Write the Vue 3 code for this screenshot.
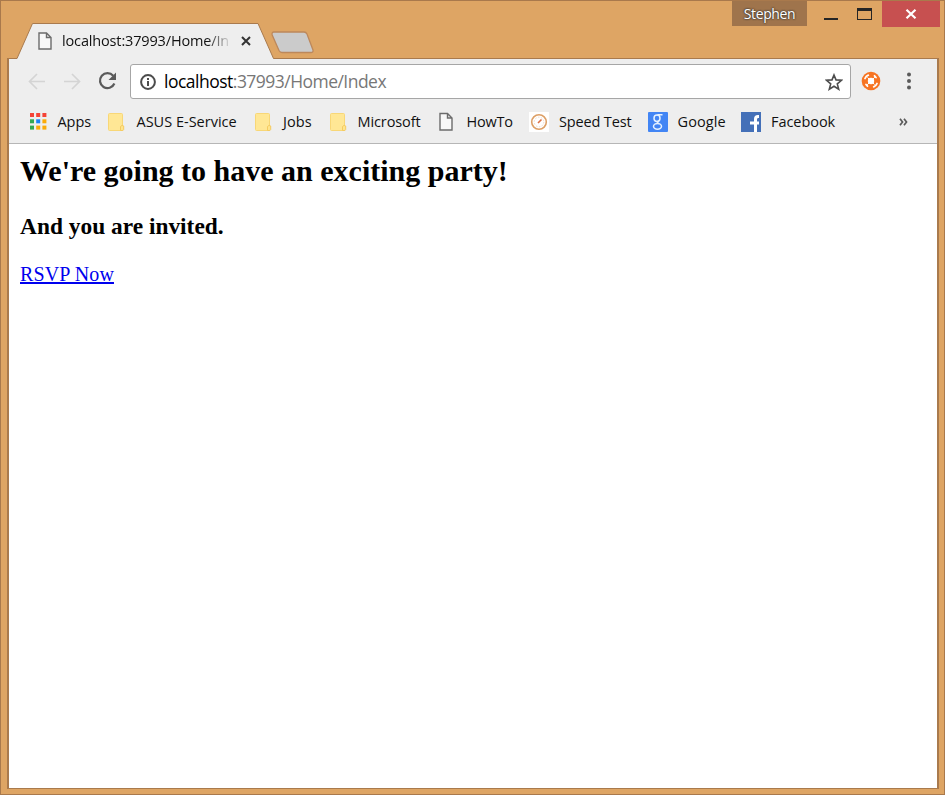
<script setup>
const dots = ['#f44336', '#f44336', '#f44336', '#34a853', '#1a82f7', '#fbab09', '#34a853', '#fbab09', '#fbab09']
const bookmarks = [
  { name: 'Apps', icon: 'apps', iconWidth: 29.5, width: 80, spacing: -0.05 },
  { name: 'ASUS E-Service', icon: 'folder', iconWidth: 28.5, width: 147, spacing: 0 },
  { name: 'Jobs', icon: 'folder', iconWidth: 28, width: 75, spacing: 0.1 },
  { name: 'Microsoft', icon: 'folder', iconWidth: 27.5, width: 109, spacing: -0.1 },
  { name: 'HowTo', icon: 'page', iconWidth: 27.5, width: 90, spacing: -0.2 },
  { name: 'Speed Test', icon: 'speed', iconWidth: 30, width: 119, spacing: -0.15 },
  { name: 'Google', icon: 'google', iconWidth: 29.5, width: 93, spacing: 0.1 },
  { name: 'Facebook', icon: 'facebook', iconWidth: 30, width: 100, spacing: -0.05 },
]
</script>

<template>
  <div class="window">
    <header class="titlebar">
      <div class="tab">
        <svg class="tab-shape" width="260" height="37" viewBox="0 0 260 37">
          <path d="M0 37V35.5H2L17.5 .5H243L258.500 35.500H260V37Z" fill="#eee" />
          <path d="M0 35.500H2L17.500 .5H243L258.500 35.500H260" fill="none" stroke="#a97a4d" />
        </svg>
        <svg class="tab-page" width="14" height="18" viewBox="0 0 14 18">
          <path d="M1 1H8.500L13 5.500V17H1ZM8.500 1V5.500H13" fill="#f8f8f8" stroke="#6c6c6c" stroke-width="1.4" />
        </svg>
        <span class="tab-title">localhost:37993/Home/In</span>
        <svg class="tab-close" width="10" height="10" viewBox="0 0 10 10">
          <path d="M1 1L9 9M9 1L1 9" stroke="#333" stroke-width="2" />
        </svg>
      </div>
      <svg class="new-tab" width="44" height="23" viewBox="0 0 44 23">
        <path d="M3 1H33Q35 1 36 3L42 19Q42.500 21.500 40 21.500H11Q9 21.500 8 19.500L1.200 4Q.5 1 3 1Z" fill="#cbcbcb" stroke="#bd885b" stroke-width="1.3" />
      </svg>
      <div class="controls">
        <span class="user">Stephen</span>
        <svg class="minmax" width="75" height="27" viewBox="0 0 75 27">
          <path d="M17 17H31V19H17Z" fill="#252525" />
          <path d="M50 7H65V19H50ZM51 10V18H64V10Z" fill="#252525" fill-rule="evenodd" />
        </svg>
        <span class="close">
          <svg width="12" height="10" viewBox="0 0 12 10"><path d="M1.500 .8L10.500 9.200M10.500 .8L1.500 9.200" stroke="#fff" stroke-width="2.200" /></svg>
        </span>
      </div>
    </header>

    <main class="client">
      <div class="toolbar">
        <svg class="nav" width="121" height="44" viewBox="0 0 121 44">
          <g fill="none" stroke="#d4d4d4" stroke-width="1.700">
            <path d="M36 22.500H21M28 15L20.500 22.500L28 30" />
            <path d="M55 22.500H70M63 15L70.500 22.500L63 30" />
          </g>
          <path d="M104.200 16.700A7.500 7.500 0 1 0 105.400 24.500" fill="none" stroke="#5a5a5a" stroke-width="2.200" />
          <path d="M107 13.500V21H99.500Z" fill="#5a5a5a" />
        </svg>
        <div class="omnibox">
          <svg class="info" width="16" height="16" viewBox="0 0 16 16">
            <circle cx="8" cy="8" r="6.900" fill="none" stroke="#4c4c4c" stroke-width="2" />
            <path d="M7 4H9V6H7ZM7 7H9V12H7Z" fill="#4c4c4c" />
          </svg>
          <span class="url"><b>localhost</b>:37993/Home/Index</span>
          <svg class="star" width="18" height="18" viewBox="0 0 18 18">
            <path d="M9 2L11 6.900L16.500 7.300L12.300 10.900L13.700 16.200L9 13.300L4.300 16.200L5.700 10.900L1.500 7.300L7 6.900Z" fill="none" stroke="#4d4d4d" stroke-width="1.600" />
          </svg>
        </div>
        <svg class="extension" width="20" height="20" viewBox="0 0 20 20">
          <circle cx="10" cy="10" r="9.300" fill="#f77422" />
          <circle cx="10" cy="10" r="3.200" fill="#fff" />
          <path d="M4 7.500Q5 5 7.300 4.200M13.500 4.800L15 6.500M16 12.500Q15 15 12.700 15.800M6.500 15.200L5 13.500" fill="none" stroke="#fff" stroke-width="1.800" stroke-linecap="round" />
          <path d="M13.800 6.200L12 8M6.200 13.800L8 12M6.500 6.500L8 8M13.500 13.500L12 12" stroke="#fff" stroke-width="1" />
        </svg>
        <svg class="menu" width="4" height="18" viewBox="0 0 4 18">
          <g fill="#5a5a5a"><circle cx="2" cy="2.500" r="2" /><circle cx="2" cy="9" r="2" /><circle cx="2" cy="15.500" r="2" /></g>
        </svg>
      </div>

      <nav class="bookmarks">
        <a v-for="b in bookmarks" :key="b.name" class="bookmark" :style="{ width: b.width + 'px' }">
          <span class="bookmark-icon" :style="{ width: b.iconWidth + 'px' }">
            <svg width="20" height="20" viewBox="0 0 20 20">
              <g v-if="b.icon === 'apps'">
                <rect v-for="(c, i) in dots" :key="i" :x="2 + (i % 3) * 6.200" :y="1 + Math.floor(i / 3) * 6.300" width="4" height="4" :fill="c" />
              </g>
              <g v-else-if="b.icon === 'folder'">
                <rect x=".5" y="1.500" width="14" height="17" rx="1" fill="#ffe795" stroke="#f8d777" />
                <path d="M12.500 18.500V14.500Q14 12.500 15.700 14V17.500Q15.500 18.500 14 18.500Z" fill="#ffe58c" stroke="#f5cb60" />
              </g>
              <path v-else-if="b.icon === 'page'" d="M1 1.500H8.500L13 6V18H1ZM8.500 1.500V6H13" fill="#f8f8f8" stroke="#6c6c6c" stroke-width="1.400" />
              <g v-else-if="b.icon === 'speed'">
                <rect width="20" height="20" fill="#fff" />
                <circle cx="10" cy="10" r="7.300" fill="none" stroke="#dda067" stroke-width="1.600" />
                <circle cx="10" cy="10" r="4.800" fill="none" stroke="#f1d8c4" stroke-dasharray="1.500 1.500" />
                <path d="M9 11L12.500 7.500" stroke="#dc7045" stroke-width="1.600" />
              </g>
              <g v-else-if="b.icon === 'google'">
                <rect width="20" height="20" rx="1" fill="#4285f4" />
                <g fill="none" stroke="#e4f1ff" stroke-width="1.500">
                  <ellipse cx="9" cy="6.200" rx="3" ry="3.200" />
                  <path d="M9.500 2.800H14.500M11 9Q8 10 10.500 11.200" />
                  <ellipse cx="9.500" cy="14.300" rx="4" ry="2.900" />
                </g>
              </g>
              <g v-else>
                <rect width="20" height="20" fill="#4470b8" />
                <path d="M13 20V12.500H9V9.500H13V7Q13 3 17 3H18V6H17Q16 6 16 7.500V9.500H18V12.500H16V20Z" fill="#fff" />
              </g>
            </svg>
          </span>
          <span class="label" :style="{ letterSpacing: b.spacing + 'px' }">{{ b.name }}</span>
        </a>
        <svg class="more" width="9" height="8" viewBox="0 0 9 8"><path d="M1 .8L3.500 4L1 7.200M5 .8L7.500 4L5 7.200" fill="none" stroke="#5a5a5a" stroke-width="1.700" /></svg>
      </nav>

      <section class="page">
        <h2>We're going to have an exciting party!</h2>
        <h3>And you are invited.</h3>
        <a class="rsvp">RSVP Now</a>
      </section>
    </main>
  </div>
</template>

<style>
body { margin: 0; overflow: hidden; }
</style>

<style scoped>
.window {
  box-sizing: border-box;
  width: 945px;
  height: 795px;
  padding: 0 5px 5px 6px;
  border: 1px solid #a9794c;
  background: #dea564;
  font-family: "Open Sans", "Noto Sans", sans-serif;
  color: #111;
}
.window svg { display: block; flex: none; }
.titlebar { display: flex; height: 57px; align-items: flex-start; }
.tab {
  position: relative;
  z-index: 1;
  display: flex;
  align-items: center;
  box-sizing: border-box;
  width: 258px;
  height: 36px;
  margin: 22px 0 0 8px;
  padding-left: 23px;
}
.tab-shape { position: absolute; left: 0; top: 0; }
.tab-page, .tab-title, .tab-close { position: relative; }
.tab-title {
  width: 172px;
  margin-left: 10px;
  padding-bottom: 1px;
  overflow: hidden;
  font-size: 14.5px;
  letter-spacing: -.15px;
  white-space: nowrap;
  -webkit-mask-image: linear-gradient(to right, #000 145px, transparent 170px);
  mask-image: linear-gradient(to right, #000 145px, transparent 170px);
}
.tab-close { margin-left: 7px; }
.new-tab { margin: 30px 0 0 -2px; }
.controls { display: flex; margin-left: auto; margin-right: -1px; }
.user {
  width: 75px;
  height: 25px;
  background: #9f744c;
  color: #fff;
  font-size: 14px;
  letter-spacing: -.4px;
  line-height: 26px;
  text-align: center;
  text-shadow: 0 0 2px #333, 0 0 2px #333;
}
.close {
  display: flex;
  align-items: center;
  justify-content: center;
  box-sizing: border-box;
  width: 58px;
  height: 26px;
  padding-right: 1px;
  background: #c75050;
}
.client {
  display: flex;
  flex-direction: column;
  box-sizing: border-box;
  width: 932px;
  height: 731px;
  border: solid #a97a4d;
  border-width: 1px 2px 1px 2px;
  background: #fff;
}
.toolbar { display: flex; height: 44px; background: #eee; }
.omnibox {
  display: flex;
  align-items: center;
  box-sizing: border-box;
  width: 721px;
  height: 35px;
  margin-top: 5px;
  padding: 0 7px 0 9px;
  border: 1px solid #a6a6a6;
  border-radius: 3px;
  background: #fff;
}
.url { margin-left: 8px; padding-bottom: 1px; color: #777; font-size: 17.5px; letter-spacing: -.53px; white-space: nowrap; }
.url b { color: #000; font-weight: 400; letter-spacing: -.5px; }
.star { margin-left: auto; }
.extension { margin: 12px 0 0 10px; }
.menu { margin: 13px 0 0 26px; }
.bookmarks {
  display: flex;
  box-sizing: border-box;
  height: 41px;
  padding-left: 19px;
  border-bottom: 1px solid #b6b6b6;
  background: #eee;
}
.bookmark { display: flex; flex: none; align-items: center; height: 38px; }
.bookmark-icon { flex: none; }
.label { font-size: 14.5px; line-height: 38px; white-space: nowrap; }
.more { margin: 15px 0 0 auto; margin-right: 29px; }
.page { flex: 1; padding: 10px 11px; color: #000; font: 20px "Liberation Serif", serif; }
.page h2 { margin: 0; font-size: 30px; line-height: 34px; white-space: nowrap; }
.page h3 { margin: 25px 0 23px; font-size: 23.4px; line-height: 27px; }
.rsvp { color: #00e; letter-spacing: .1px; text-decoration: underline; }
</style>
